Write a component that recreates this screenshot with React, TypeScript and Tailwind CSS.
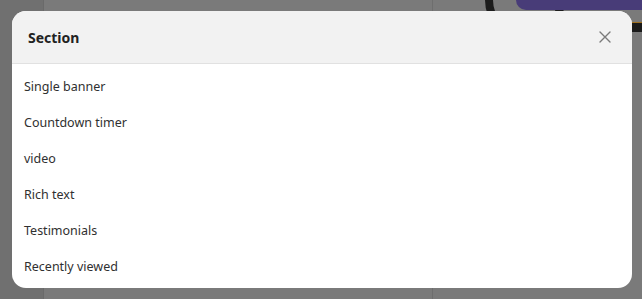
const items = ['Single banner', 'Countdown timer', 'video', 'Rich text', 'Testimonials', 'Recently viewed'];

export default function App() {
  return (
    <div className="relative h-[299px] w-[642px] overflow-hidden font-['Noto_Sans',sans-serif]">
      {/* page behind the dimmed overlay */}
      <div className="flex h-full bg-[#7a7a7a]">
        <div className="w-[44px] border-r border-[#6a6a6a] bg-[#707070]" />
        <div className="w-[389px] border-r border-[#6e6e6e]" />
        <div className="relative flex-1">
          <div className="absolute -top-[40px] left-[52px] h-[80px] w-[80px] rounded-full border-[8px] border-[#1c1c1c]" />
          <div className="absolute -top-[10px] left-[83px] h-[20px] w-[140px] rounded-[10px] bg-[#483c78]" />
          <div className="absolute right-0 top-[22px] h-[10px] w-[12px] border-t border-[#a07020] bg-[#1a1a1a]" />
        </div>
      </div>

      <div className="absolute left-[12px] top-[11px] w-[620px] overflow-hidden rounded-[14px] bg-white">
        <div className="flex h-[53px] items-center justify-between border-b border-[#e1e1e1] bg-[#f2f2f2] pl-[16px] pr-[20px]">
          <h2 className="text-[14px] font-bold text-[#222]">Section</h2>
          <svg width="14" height="14" viewBox="0 0 14 14" className="text-[#7a7a7a]">
            <path d="M2 2L12 12M12 2L2 12" stroke="currentColor" strokeWidth="1.4" strokeLinecap="round" />
          </svg>
        </div>
        <ul className="pb-[3px] pt-[5px]">
          {items.map((item) => (
            <li key={item} className="flex h-[36px] items-center px-[12px] text-[12.5px] text-[#303030]">
              {item}
            </li>
          ))}
        </ul>
      </div>
    </div>
  );
}
